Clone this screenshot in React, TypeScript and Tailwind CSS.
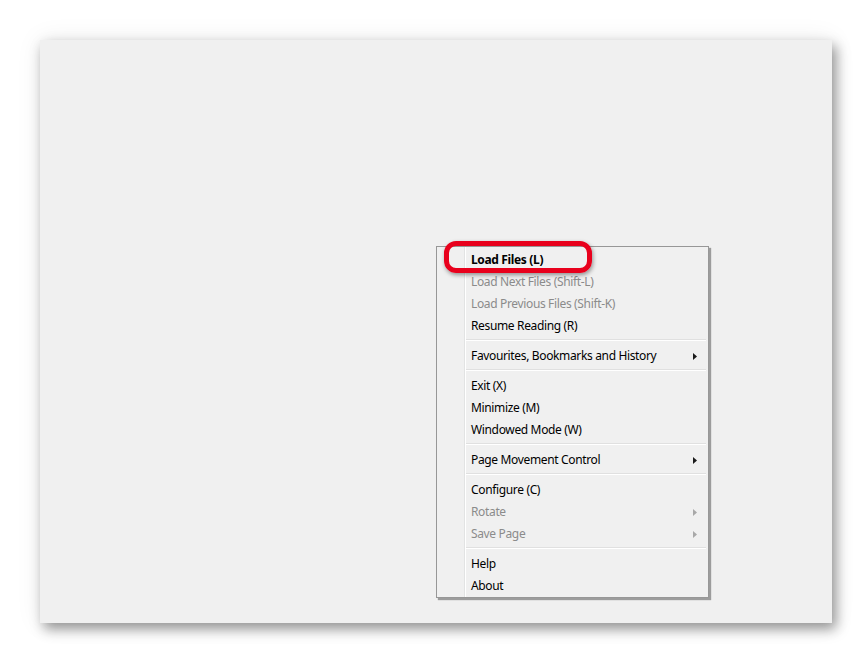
import React from 'react';

type Item = { label: string; bold?: boolean; disabled?: boolean; sub?: boolean } | 'sep';

const items: Item[] = [
  { label: 'Load Files (L)', bold: true },
  { label: 'Load Next Files (Shift-L)', disabled: true },
  { label: 'Load Previous Files (Shift-K)', disabled: true },
  { label: 'Resume Reading (R)' },
  'sep',
  { label: 'Favourites, Bookmarks and History', sub: true },
  'sep',
  { label: 'Exit (X)' },
  { label: 'Minimize (M)' },
  { label: 'Windowed Mode (W)' },
  'sep',
  { label: 'Page Movement Control', sub: true },
  'sep',
  { label: 'Configure (C)' },
  { label: 'Rotate', disabled: true, sub: true },
  { label: 'Save Page', disabled: true, sub: true },
  'sep',
  { label: 'Help' },
  { label: 'About' },
];

const Arrow = ({ disabled }: { disabled?: boolean }) => (
  <svg width="4" height="7" viewBox="0 0 4 7" className="mr-[9px]">
    <path d="M0 0 L4 3.5 L0 7 Z" fill={disabled ? '#a8a8a8' : '#1a1a1a'} />
  </svg>
);

const ContextMenu = () => (
  <div
    className="absolute left-[396px] top-[206px] w-[273px] border border-[#979797] bg-[#f0f0f0] py-[1px] pl-[2px] pr-[2px] shadow-[2px_2px_1px_rgba(0,0,0,0.35)]"
    style={{ fontFamily: '"Noto Sans", "Open Sans", sans-serif' }}
  >
    {/* icon gutter line */}
    <div className="absolute left-[27px] top-0 bottom-0 w-[1px] bg-[#e2e3e3]" />
    <div className="absolute left-[28px] top-0 bottom-0 w-[1px] bg-white" />
    <div className="relative flex flex-col">
      {items.map((it, i) =>
        it === 'sep' ? (
          <div key={i} className="flex h-[8px] flex-col justify-center pl-[27px]">
            <div className="h-[1px] bg-[#e0e0e0]" />
            <div className="h-[1px] bg-white" />
          </div>
        ) : (
          <div key={i} className="flex h-[22px] items-center justify-between pl-[32px] pt-[2px]">
            <span
              className={`text-[12px] leading-none tracking-[-0.35px] ${it.bold ? 'font-bold text-black' : ''} ${
                it.disabled ? 'text-[#8b8b8b]' : 'text-black'
              }`}
            >
              {it.label}
            </span>
            {it.sub && <Arrow disabled={it.disabled} />}
          </div>
        )
      )}
    </div>
  </div>
);

export default function App() {
  return (
    <div className="h-[656px] w-[864px] bg-white pl-[40px] pt-[40px]">
      <div className="relative h-[583px] w-[792px] bg-[#f0f0f0] shadow-[4px_6px_12px_rgba(0,0,0,0.4),0_0_24px_rgba(0,0,0,0.08)]">
        <ContextMenu />
        {/* red highlight around the first entry */}
        <div className="absolute left-[404px] top-[201px] h-[32px] w-[148px] rounded-[12px] border-[5px] border-[#e8001c] shadow-[1px_2px_4px_rgba(0,0,0,0.4)]" />
      </div>
    </div>
  );
}
